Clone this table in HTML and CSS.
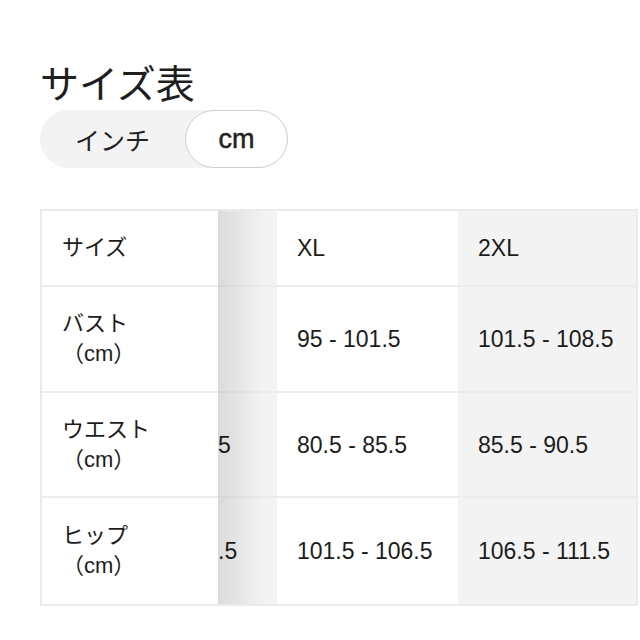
FILE: index.html
```html
<!DOCTYPE html>
<html lang="ja">
<head>
<meta charset="utf-8">
<title>サイズ表</title>
<link rel="stylesheet" href="styles.css">
</head>
<body>
<main class="page">
  <h1 class="title">サイズ表</h1>
  <div class="unit-toggle">
    <span class="unit">インチ</span>
    <span class="unit unit-active">cm</span>
  </div>
  <section class="size-table">
    <div class="labels">
      <div class="cell label">サイズ</div>
      <div class="cell label">バスト<br>（cm）</div>
      <div class="cell label">ウエスト<br>（cm）</div>
      <div class="cell label">ヒップ<br>（cm）</div>
    </div>
    <div class="scroller">
      <div class="col col-alt col-peek">
        <div class="cell"></div>
        <div class="cell"></div>
        <div class="cell">5</div>
        <div class="cell">.5</div>
      </div>
      <div class="col">
        <div class="cell">XL</div>
        <div class="cell">95 - 101.5</div>
        <div class="cell">80.5 - 85.5</div>
        <div class="cell">101.5 - 106.5</div>
      </div>
      <div class="col col-alt">
        <div class="cell">2XL</div>
        <div class="cell">101.5 - 108.5</div>
        <div class="cell">85.5 - 90.5</div>
        <div class="cell">106.5 - 111.5</div>
      </div>
    </div>
  </section>
</main>
</body>
</html>
```

FILE: styles.css
```css
html, body {
  margin: 0;
  padding: 0;
  background: #ffffff;
}

body {
  font-family: "Liberation Sans", "Noto Sans CJK JP", sans-serif;
  color: #1c1c1c;
}

.page {
  padding: 58px 0 0 40px;
}

.title {
  margin: 0;
  font-family: "Noto Sans CJK JP", sans-serif;
  font-weight: 400;
  font-size: 39px;
  line-height: 47px;
  color: #1e1e1e;
}

.unit-toggle {
  margin-top: 5px;
  display: inline-flex;
  width: 248px;
  height: 58px;
  background: #f3f3f3;
  border-radius: 29px;
}

.unit {
  display: flex;
  align-items: center;
  justify-content: center;
  width: 145px;
  font-family: "Noto Sans CJK JP", sans-serif;
  font-size: 25px;
  color: #222;
}

.unit-active {
  box-sizing: border-box;
  width: 103px;
  background: #ffffff;
  border: 1px solid #cfcfcf;
  border-radius: 29px;
  font-family: "Liberation Sans", sans-serif;
  font-weight: 400;
  font-size: 27px;
  -webkit-text-stroke: 0.5px #222;
}

.size-table {
  margin-top: 41px;
  display: flex;
  width: 598px;
  box-sizing: border-box;
  border: 2px solid #ebebeb;
}

.labels {
  width: 176px;
  flex: none;
  display: grid;
  grid-template-rows: 76px 106px 105px 106px;
  background: #fff;
}

.cell {
  display: flex;
  align-items: center;
  padding-left: 20px;
  font-size: 23px;
  line-height: 30px;
  white-space: nowrap;
  border-bottom: 2px solid #ececec;
  box-sizing: border-box;
}

.cell:last-child {
  border-bottom: none;
}

.label {
  padding-left: 20px;
  font-size: 22px;
}

.scroller {
  position: relative;
  flex: 1;
  display: flex;
  overflow: hidden;
}

.scroller::before {
  content: "";
  position: absolute;
  left: 0;
  top: 0;
  bottom: 0;
  width: 46px;
  background: linear-gradient(to right, rgba(0, 0, 0, 0.10), rgba(0, 0, 0, 0));
  z-index: 1;
}

.col {
  width: 181px;
  flex: none;
  display: grid;
  grid-template-rows: 76px 106px 105px 106px;
}

.col-peek {
  width: 59px;
}

.col-peek .cell {
  padding-left: 0;
}

.col-alt {
  background: #f3f3f3;
}
```
